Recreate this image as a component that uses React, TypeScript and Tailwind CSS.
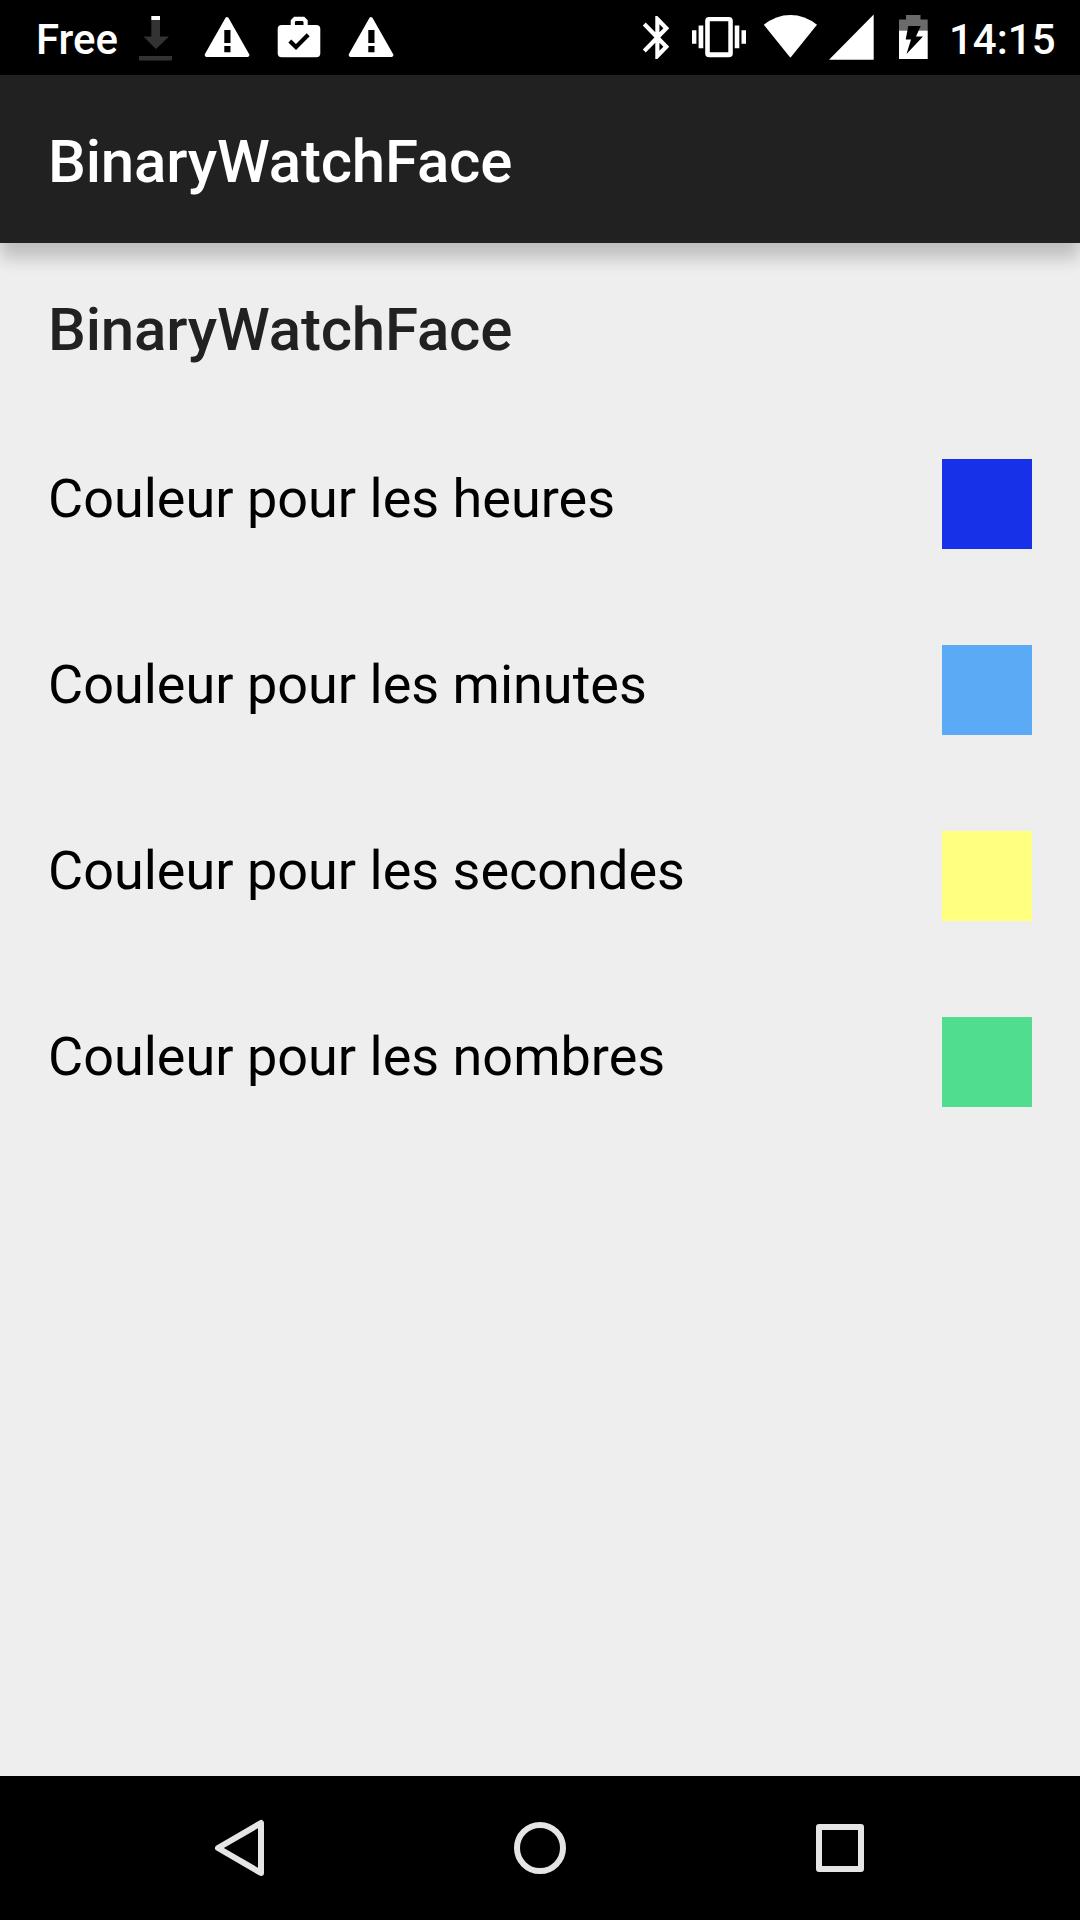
import type { ReactNode } from 'react'

interface ColorSetting {
  label: string
  swatch: string
}

const settings: ColorSetting[] = [
  { label: 'Couleur pour les heures', swatch: 'bg-[#1631e8]' },
  { label: 'Couleur pour les minutes', swatch: 'bg-[#5aaaf5]' },
  { label: 'Couleur pour les secondes', swatch: 'bg-[#ffff80]' },
  { label: 'Couleur pour les nombres', swatch: 'bg-[#50dd8f]' },
]

function DownloadIcon() {
  return (
    <svg className="ml-[20px] h-[75px] w-[36px]" viewBox="138 0 36 75">
      <path fill="#333" d="M151.3 20H160v16.5h9L156 49l-12.5-12.5h7.8zM139 56h33v4.6h-33z" />
      <path fill="#fff" d="M151.3 16H160v4h-8.7z" />
    </svg>
  )
}

function WarningIcon({ className }: { className: string }) {
  return (
    <svg className={`h-[75px] w-[46px] ${className}`} viewBox="203.5 0 46 75">
      <path
        fill="#fff"
        stroke="#fff"
        strokeWidth="4"
        strokeLinejoin="round"
        d="M226.5 19.2 246.8 55h-40.6z"
      />
      <path fill="#000" d="M223.8 30h6.2v13h-6.2zM223.8 46h6.2v6.2h-6.2z" />
    </svg>
  )
}

function BriefcaseIcon() {
  return (
    <svg className="ml-[27.5px] h-[75px] w-[44px]" viewBox="277 0 44 75">
      <rect x="277.7" y="25" width="42.6" height="32.2" rx="4" fill="#fff" />
      <path fill="none" stroke="#fff" strokeWidth="4.2" d="M292.8 27v-6l2.2-2.2h8.4l2.2 2.2v6" />
      <path fill="none" stroke="#000" strokeWidth="4.2" d="m289.8 41 6.2 6 12.2-12.3" />
    </svg>
  )
}

function BluetoothIcon() {
  return (
    <svg className="h-[75px] w-[28px]" viewBox="642 0 28 75">
      <path
        fill="#fff"
        transform="translate(632.4 11.7) scale(2.08 2.15)"
        d="M17.71 7.71 12 2h-1v7.59L6.41 5 5 6.41 10.59 12 5 17.59 6.41 19 11 14.41V22h1l5.71-5.71-4.3-4.29 4.3-4.29zM13 5.83l1.88 1.88L13 9.59V5.83zm1.88 10.46L13 18.17v-3.76l1.88 1.88z"
      />
    </svg>
  )
}

function VibrateIcon() {
  return (
    <svg className="ml-[21px] h-[75px] w-[56px]" viewBox="691 0 56 75">
      <path
        fill="#fff"
        fillRule="evenodd"
        d="M709 17h20a3.8 3.8 0 0 1 3.8 3.8v32.6a3.8 3.8 0 0 1-3.8 3.8h-20a3.8 3.8 0 0 1-3.8-3.8V20.8a3.8 3.8 0 0 1 3.8-3.8zM709.8 21.3v31h18.5v-31z"
      />
      <path
        fill="#fff"
        d="M698.6 25.6h4.7v22.6h-4.7zM692 30.2h4.4v13.5H692zM734.7 25.6h4.6v22.6h-4.6zM741.5 30.2h4.5v13.5h-4.5z"
      />
    </svg>
  )
}

function WifiIcon() {
  return (
    <svg className="ml-[16px] h-[75px] w-[55px]" viewBox="763 0 55 75">
      <path fill="#fff" d="M790.4 57.7 763.8 24.8Q776 15 790.4 15T817 24.8z" />
    </svg>
  )
}

function SignalIcon() {
  return (
    <svg className="ml-[11px] h-[75px] w-[45px]" viewBox="829 0 45 75">
      <path fill="#fff" d="M829 59.7h44.7V14.5z" />
    </svg>
  )
}

function BatteryIcon() {
  return (
    <svg className="ml-[25px] h-[75px] w-[29px]" viewBox="899 0 29 75">
      <path fill="#6b6b6b" d="M899 19.5h7V15h14.5v4.5h7.2v11H899z" />
      <path fill="#fff" d="M899 30.5h28.7V59H899z" />
      <path fill="#000" d="M908.3 26h12.4L916 36.5h7L906.5 54l4.5-14.5h-5.3z" />
    </svg>
  )
}

function StatusBar() {
  return (
    <div className="flex h-[75px] shrink-0 justify-between bg-black text-[42px] font-medium text-white">
      <div className="flex">
        <span className="w-[118px] pl-[36px] pt-[4px] leading-[71px]">Free</span>
        <DownloadIcon />
        <WarningIcon className="ml-[29.5px]" />
        <BriefcaseIcon />
        <WarningIcon className="ml-[26.5px]" />
      </div>
      <div className="flex">
        <BluetoothIcon />
        <VibrateIcon />
        <WifiIcon />
        <SignalIcon />
        <BatteryIcon />
        <span className="ml-[21px] w-[131px] pt-[4px] leading-[71px]">14:15</span>
      </div>
    </div>
  )
}

function NavButton({ label, children }: { label: string; children: ReactNode }) {
  return (
    <button type="button" aria-label={label} className="flex h-[144px] w-[300px] items-center justify-center">
      <svg
        className="size-[72px]"
        viewBox="0 0 72 72"
        fill="none"
        stroke="#e5e5e5"
        strokeWidth="6"
        strokeLinejoin="round"
      >
        {children}
      </svg>
    </button>
  )
}

export default function App() {
  return (
    <div className="flex h-[1920px] w-[1080px] flex-col overflow-hidden bg-[#eeeeee] font-['Roboto',sans-serif]">
      <StatusBar />

      <header className="z-10 h-[168px] shrink-0 bg-[#212121] pl-[48px] pt-[5px] shadow-[0_15px_16px_rgba(0,0,0,0.2)]">
        <h1 className="text-[60px] font-medium leading-[163px] tracking-[-0.17px] text-white">BinaryWatchFace</h1>
      </header>

      <main className="grow">
        <h2 className="pl-[48px] pt-[5px] text-[60px] font-medium leading-[163px] tracking-[-0.17px] text-[#212121]">
          BinaryWatchFace
        </h2>
        <ul>
          {settings.map((setting) => (
            <li key={setting.label} className="flex h-[186px] justify-between px-[48px]">
              <span className="text-[54px] leading-[175px] text-black">{setting.label}</span>
              <span className={`mt-[48px] size-[90px] ${setting.swatch}`} />
            </li>
          ))}
        </ul>
      </main>

      <nav className="flex h-[144px] shrink-0 justify-center bg-black">
        <NavButton label="Retour">
          <path d="M14 36 57 11v50z" />
        </NavButton>
        <NavButton label="Accueil">
          <circle cx="36" cy="36" r="23" />
        </NavButton>
        <NavButton label="Applications récentes">
          <rect x="15" y="15" width="42" height="42" />
        </NavButton>
      </nav>
    </div>
  )
}
